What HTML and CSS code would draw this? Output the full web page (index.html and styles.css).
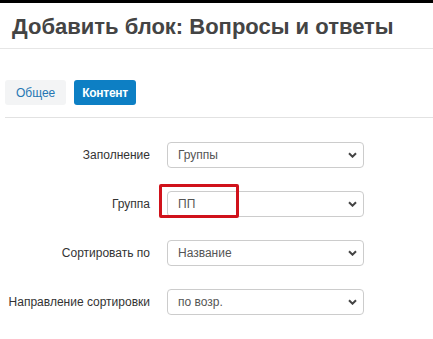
FILE: index.html
```html
<!DOCTYPE html>
<html lang="ru">
<head>
    <meta charset="UTF-8">
    <title>Добавить блок: Вопросы и ответы</title>
    <link rel="stylesheet" href="styles.css">
</head>
<body>

<div class="topbar"></div>

<header class="page-head">
    <h1>Добавить блок: Вопросы и ответы</h1>
</header>

<div class="tabs">
    <button class="tab">Общее</button>
    <button class="tab active">Контент</button>
</div>

<div class="form">
    <label class="label">Заполнение</label>
    <div class="select"><span>Группы</span><svg width="9" height="6" viewBox="0 0 9 6"><path d="M1 1.2l3.5 3.5 3.5-3.5" fill="none" stroke="#444" stroke-width="2"/></svg></div>

    <label class="label">Группа</label>
    <div class="field">
        <div class="select"><span>ПП</span><svg width="9" height="6" viewBox="0 0 9 6"><path d="M1 1.2l3.5 3.5 3.5-3.5" fill="none" stroke="#444" stroke-width="2"/></svg></div>
        <div class="highlight"></div>
    </div>

    <label class="label">Сортировать по</label>
    <div class="select"><span>Название</span><svg width="9" height="6" viewBox="0 0 9 6"><path d="M1 1.2l3.5 3.5 3.5-3.5" fill="none" stroke="#444" stroke-width="2"/></svg></div>

    <label class="label">Направление сортировки</label>
    <div class="select"><span>по возр.</span><svg width="9" height="6" viewBox="0 0 9 6"><path d="M1 1.2l3.5 3.5 3.5-3.5" fill="none" stroke="#444" stroke-width="2"/></svg></div>
</div>

</body>
</html>
```

FILE: styles.css
```css
body {
    margin: 0;
    font-family: "Liberation Sans", Arial, sans-serif;
    background-color: white;
    color: #333;
}
.topbar {
    height: 3px;
    background: #000;
}
.page-head {
    padding: 10px 12px 0;
    height: 35px;
    border-bottom: 1px solid #e6e6e6;
}
.page-head h1 {
    margin: 0;
    font-size: 22px;
    line-height: 28px;
    font-weight: bold;
    color: #444;
}
.tabs {
    display: flex;
    gap: 8px;
    margin: 31px 0 0 5px;
    padding-bottom: 12px;
    border-bottom: 1px solid #e2e2e2;
}
.tab {
    font-family: inherit;
    font-size: 12px;
    height: 25px;
    padding: 0 11px;
    border: none;
    border-radius: 3px;
    background: #f3f4f5;
    color: #2677b3;
}
.tab.active {
    background: #0d7fc4;
    color: white;
    font-weight: bold;
    letter-spacing: -0.3px;
    padding: 0 8px;
}
.form {
    display: grid;
    grid-template-columns: 150px 197px;
    column-gap: 17px;
    row-gap: 23px;
    align-items: center;
    margin-top: 24px;
}
.label {
    text-align: right;
    font-size: 12px;
    color: #333;
}
.field {
    position: relative;
}
.select {
    display: flex;
    align-items: center;
    justify-content: space-between;
    box-sizing: border-box;
    height: 26px;
    padding: 0 6px 0 10px;
    border: 1px solid #ccc;
    border-radius: 4px;
    font-size: 12px;
    color: #555;
}
.highlight {
    position: absolute;
    left: -8px;
    top: -7px;
    width: 80px;
    height: 34px;
    box-sizing: border-box;
    border: 3px solid #d0121b;
    border-radius: 2px;
}
```
